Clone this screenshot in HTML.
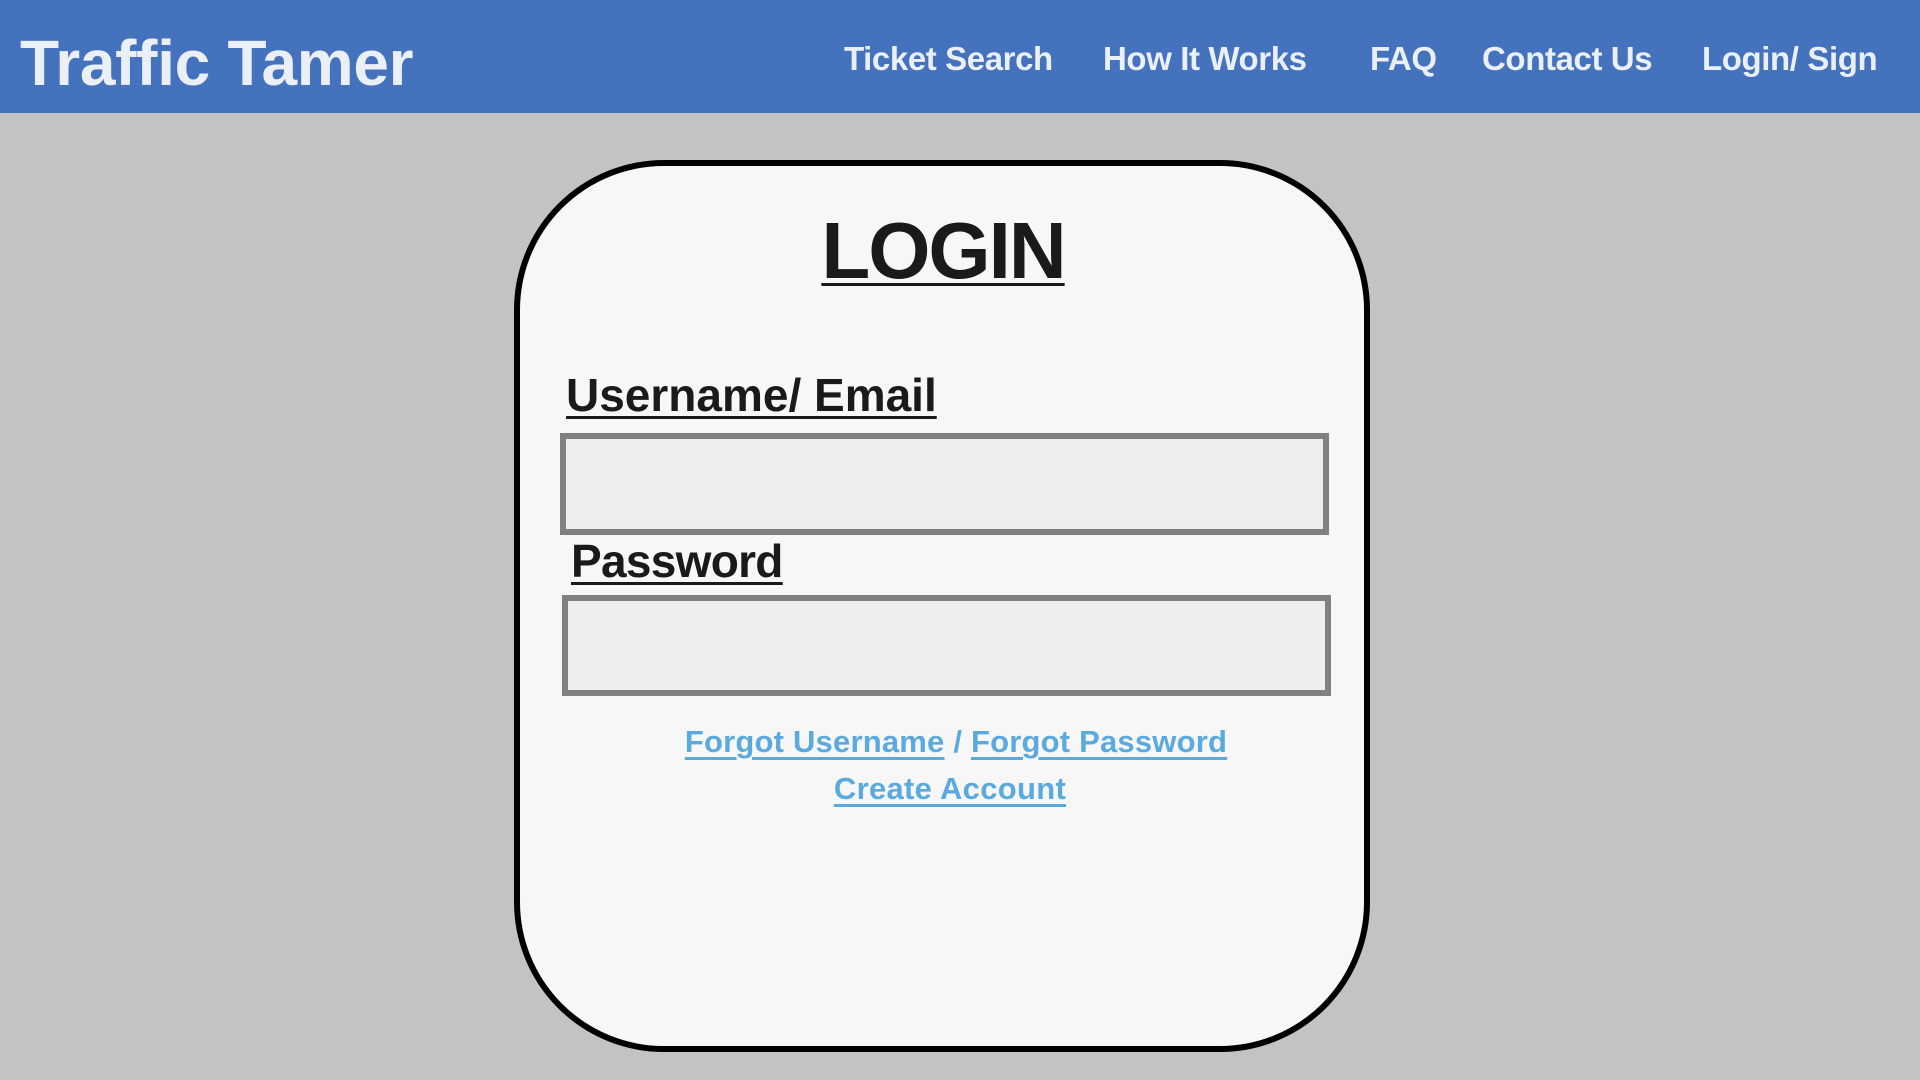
<!DOCTYPE html>
<html><head><meta charset="utf-8"><style>
*{margin:0;padding:0;box-sizing:border-box}
body{width:1920px;height:1080px;background:#c3c3c3;font-family:"Liberation Sans",sans-serif;font-weight:bold;position:relative;overflow:hidden}
.hdr{position:absolute;left:0;top:0;width:1920px;height:113px;background:#4472bd}
.t{position:absolute;color:#eaeff8;white-space:nowrap}
.card{position:absolute;left:514px;top:160px;width:856px;height:892px;border:6px solid #000;border-radius:150px;background:#f7f7f7}
.in{position:absolute;border:6px solid #808080;background:#eeeeee}
.u{text-decoration:underline;text-decoration-thickness:3px;text-underline-offset:5px}
.lk{color:#5aaae0}
.n{top:40px;font-size:33px;letter-spacing:-0.4px}
</style></head><body>
<div class="hdr"></div>
<div class="t" style="left:20px;top:26px;font-size:64px;letter-spacing:-0.3px">Traffic Tamer</div>
<div class="t n" style="left:844px">Ticket Search</div>
<div class="t n" style="left:1103px">How It Works</div>
<div class="t n" style="left:1370px">FAQ</div>
<div class="t n" style="left:1482px">Contact Us</div>
<div class="t n" style="left:1702px">Login/ Sign</div>
<div class="card"></div>
<div class="t u" style="left:820px;top:205px;width:246px;text-align:center;font-size:80px;color:#1a1a1a;letter-spacing:-2px">LOGIN</div>
<div class="t u" style="left:566px;top:368px;font-size:46px;color:#1a1a1a;letter-spacing:0px">Username/ Email</div>
<div class="in" style="left:560px;top:433px;width:769px;height:102px"></div>
<div class="t u" style="left:571px;top:534px;font-size:46px;color:#1a1a1a;letter-spacing:-0.7px">Password</div>
<div class="in" style="left:562px;top:595px;width:769px;height:101px"></div>
<div class="t" style="left:656px;top:724px;width:600px;text-align:center;font-size:31px;letter-spacing:0.2px;color:#5aaae0"><span class="u lk">Forgot Username</span> / <span class="u lk">Forgot Password</span></div>
<div class="t" style="left:650px;top:771px;width:600px;text-align:center;font-size:31px;letter-spacing:0.3px"><span class="u lk">Create Account</span></div>
</body></html>
